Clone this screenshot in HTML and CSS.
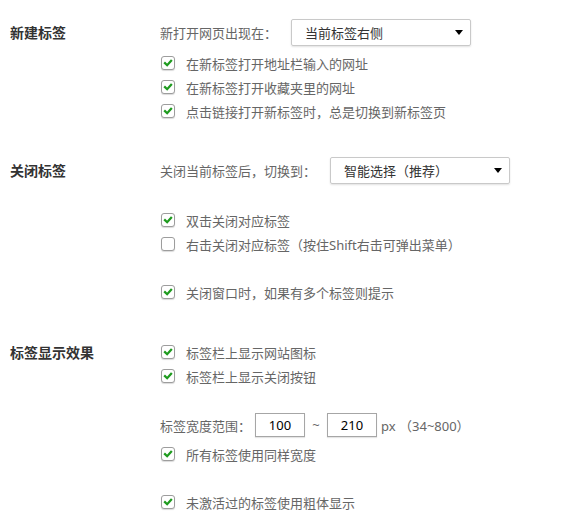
FILE: index.html
```html
<!DOCTYPE html>
<html lang="zh-CN">

<head>
    <meta charset="UTF-8">
    <meta name="viewport" content="width=device-width, initial-scale=1.0">
    <title>标签设置</title>
    <link rel="stylesheet" href="styles.css">
</head>

<body>
    <div id="settings">
        <!-- 新建标签 -->
        <section class="group">
            <h3 class="group-title">新建标签</h3>
            <div class="row row-select">
                <span class="caption">新打开网页出现在：</span>
                <div class="select">当前标签右侧<span class="arrow"></span></div>
            </div>
            <label class="row check first">
                <span class="box on"><svg viewBox="0 0 14 14"><path d="M3.5 7.2 L6 9.6 L10.6 4.4"/></svg></span>
                在新标签打开地址栏输入的网址
            </label>
            <label class="row check">
                <span class="box on"><svg viewBox="0 0 14 14"><path d="M3.5 7.2 L6 9.6 L10.6 4.4"/></svg></span>
                在新标签打开收藏夹里的网址
            </label>
            <label class="row check">
                <span class="box on"><svg viewBox="0 0 14 14"><path d="M3.5 7.2 L6 9.6 L10.6 4.4"/></svg></span>
                点击链接打开新标签时，总是切换到新标签页
            </label>
        </section>

        <!-- 关闭标签 -->
        <section class="group group-close">
            <h3 class="group-title">关闭标签</h3>
            <div class="row row-select">
                <span class="caption">关闭当前标签后，切换到：</span>
                <div class="select">智能选择（推荐）<span class="arrow"></span></div>
            </div>
            <label class="row check after-select">
                <span class="box on"><svg viewBox="0 0 14 14"><path d="M3.5 7.2 L6 9.6 L10.6 4.4"/></svg></span>
                双击关闭对应标签
            </label>
            <label class="row check">
                <span class="box"></span>
                右击关闭对应标签（按住Shift右击可弹出菜单）
            </label>
            <label class="row check spaced">
                <span class="box on"><svg viewBox="0 0 14 14"><path d="M3.5 7.2 L6 9.6 L10.6 4.4"/></svg></span>
                关闭窗口时，如果有多个标签则提示
            </label>
        </section>

        <!-- 标签显示效果 -->
        <section class="group group-display">
            <h3 class="group-title">标签显示效果</h3>
            <label class="row check">
                <span class="box on"><svg viewBox="0 0 14 14"><path d="M3.5 7.2 L6 9.6 L10.6 4.4"/></svg></span>
                标签栏上显示网站图标
            </label>
            <label class="row check">
                <span class="box on"><svg viewBox="0 0 14 14"><path d="M3.5 7.2 L6 9.6 L10.6 4.4"/></svg></span>
                标签栏上显示关闭按钮
            </label>
            <div class="row row-width">
                <span class="caption">标签宽度范围：</span>
                <input class="num" value="100">
                <span class="tilde">~</span>
                <input class="num" value="210">
                <span class="unit">px （34~800）</span>
            </div>
            <label class="row check after-width">
                <span class="box on"><svg viewBox="0 0 14 14"><path d="M3.5 7.2 L6 9.6 L10.6 4.4"/></svg></span>
                所有标签使用同样宽度
            </label>
            <label class="row check spaced">
                <span class="box on"><svg viewBox="0 0 14 14"><path d="M3.5 7.2 L6 9.6 L10.6 4.4"/></svg></span>
                未激活过的标签使用粗体显示
            </label>
        </section>
    </div>
</body>

</html>
```

FILE: styles.css
```css
* {
    margin: 0;
    padding: 0;
    box-sizing: border-box;
}

body {
    background: #fff;
    font-family: "Noto Sans", "Noto Sans CJK SC", sans-serif;
    font-size: 13px;
    color: #666;
    text-spacing-trim: space-all;
    overflow: hidden;
}

#settings {
    padding: 16px 0 0 10px;
}

.group {
    display: grid;
    grid-template-columns: 150px auto;
    justify-content: start;
}

.group-close {
    margin-top: 31px;
}

.group-display {
    margin-top: 36px;
}

.group-title {
    grid-row: 1;
    grid-column: 1;
    align-self: center;
    font-size: 14px;
    font-weight: bold;
    color: #333;
}

.row {
    grid-column: 2;
    height: 24px;
    display: flex;
    align-items: center;
    white-space: nowrap;
}

.row-select {
    height: 32px;
}

.check.first {
    margin-top: 3px;
}

.check.after-select {
    margin-top: 22px;
}

.check.spaced {
    margin-top: 24px;
}

.check.after-width {
    margin-top: 1px;
}

.select {
    width: 180px;
    height: 27px;
    margin-left: 14px;
    padding: 0 7px 0 13px;
    display: flex;
    align-items: center;
    justify-content: space-between;
    border: 1px solid #c9c9c9;
    border-radius: 2px;
    box-shadow: 0 1px 2px rgba(0, 0, 0, 0.12);
    color: #333;
}

.arrow {
    width: 0;
    height: 0;
    border-left: 4px solid transparent;
    border-right: 4px solid transparent;
    border-top: 5px solid #000;
}

.box {
    width: 14px;
    height: 14px;
    margin: 0 11px 0 1px;
    border: 1px solid #9d9d9d;
    border-radius: 3px;
    background: #fff;
    box-shadow: 0 1px 1px rgba(0, 0, 0, 0.15);
    display: flex;
}

.box svg {
    width: 12px;
    height: 12px;
    fill: none;
    stroke: #1f9b1f;
    stroke-width: 2.6;
    stroke-linecap: square;
}

.row-width {
    height: 32px;
    margin-top: 21px;
}

.num {
    width: 50px;
    height: 24px;
    margin-left: 4px;
    border: 1px solid #a6a6a6;
    box-shadow: 0 1px 1px rgba(0, 0, 0, 0.1);
    text-align: center;
    font-family: inherit;
    font-size: 13px;
    color: #000;
    outline: none;
}

.tilde {
    width: 14px;
    margin-left: 4px;
    text-align: center;
}

.unit {
    margin-left: 4px;
}
```
